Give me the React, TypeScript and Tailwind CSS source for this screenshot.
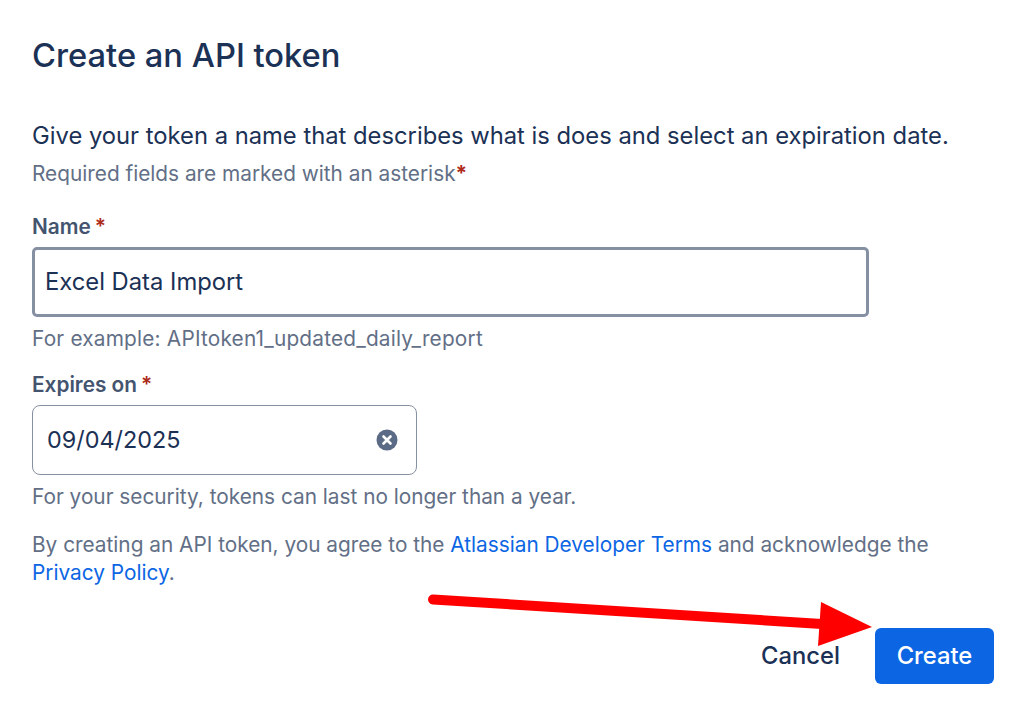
export default function App() {
  return (
    <div className="relative h-[715px] w-[1024px] overflow-hidden bg-white pl-8 font-['Inter',sans-serif] text-[#172b4d]">
      <h1 className="pt-[33px] text-[32.7px] font-medium leading-[44px] text-[#1b3155]">Create an API token</h1>

      <p className="mt-[43px] text-[23.77px] leading-[32px] text-[#1b3155]">
        Give your token a name that describes what is does and select an expiration date.
      </p>
      <p className="mt-[8px] text-[20.8px] leading-[28px] text-[#626f86]">
        Required fields are marked with an asterisk<span className="font-bold text-[#ae2a19]">*</span>
      </p>

      <label className="mt-[25px] flex gap-[4px] text-[20.8px] font-semibold leading-[28px] text-[#44546f]">
        <span>Name</span>
        <span className="text-[#ae2a19]">*</span>
      </label>
      <div className="mt-[6px] flex h-[70px] w-[837px] items-center rounded-[5px] border-[3px] border-[#8590a2] pl-[10px] text-[23.77px] text-[#1b3155]">
        Excel Data Import
      </div>
      <p className="mt-[8px] text-[20.8px] leading-[28px] tracking-[0.2px] text-[#626f86]">For example: APItoken1_updated_daily_report</p>

      <label className="mt-[18px] flex gap-[4px] text-[20.8px] font-semibold leading-[28px] text-[#44546f]">
        <span>Expires on</span>
        <span className="text-[#ae2a19]">*</span>
      </label>
      <div className="mt-[6px] flex h-[70px] w-[385px] items-center justify-between rounded-[8px] border-[1.5px] border-[#8590a2] pl-[14px] pr-[18px] text-[23.4px] text-[#1b3155]">
        <span>09/04/2025</span>
        <svg width="22" height="22" viewBox="0 0 22 22">
          <circle cx="11" cy="11" r="10.5" fill="#5b6a85" />
          <path d="M7.5 7.5l7 7M14.5 7.5l-7 7" stroke="#fff" strokeWidth="2.6" strokeLinecap="round" />
        </svg>
      </div>
      <p className="mt-[8px] text-[20.8px] leading-[28px] text-[#626f86]">For your security, tokens can last no longer than a year.</p>

      <p className="mt-[20px] w-[960px] text-[20.8px] leading-[28px] text-[#626f86]">
        By creating an API token, you agree to the <span className="text-[#0c66e4]">Atlassian Developer Terms</span> and acknowledge the{" "}
        <span className="text-[#0c66e4]">Privacy Policy</span>.
      </p>

      <div className="mt-[41px] flex w-[962px] items-center justify-end gap-[35px]">
        <span className="text-[23.77px] font-medium text-[#1b3155]">Cancel</span>
        <button className="flex h-[56px] w-[119px] items-center justify-center rounded-[6px] bg-[#0c66e4] text-[23.77px] font-medium text-white">
          Create
        </button>
      </div>

      {/* red annotation arrow */}
      <svg className="absolute left-0 top-0" width="1024" height="715" viewBox="0 0 1024 715">
        <path d="M433 599.5L822 624" stroke="#ff0000" strokeWidth="10" strokeLinecap="round" />
        <path d="M821 602L872 627L818 646Z" fill="#ff0000" />
      </svg>
    </div>
  );
}
